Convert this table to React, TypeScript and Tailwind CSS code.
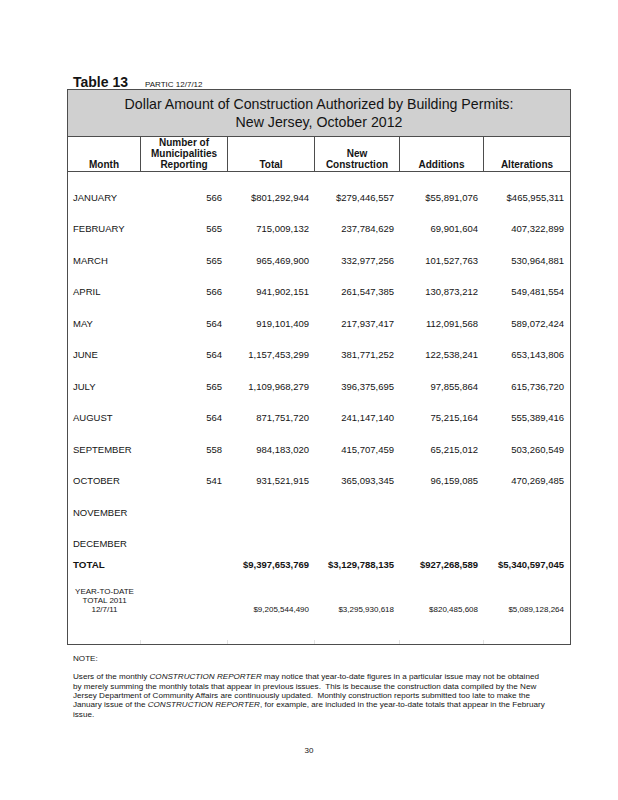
import React from 'react'

type Row = {
  month: string
  reporting?: string
  total?: string
  newConstruction?: string
  additions?: string
  alterations?: string
}

const rows: Row[] = [
  { month: 'JANUARY', reporting: '566', total: '$801,292,944', newConstruction: '$279,446,557', additions: '$55,891,076', alterations: '$465,955,311' },
  { month: 'FEBRUARY', reporting: '565', total: '715,009,132', newConstruction: '237,784,629', additions: '69,901,604', alterations: '407,322,899' },
  { month: 'MARCH', reporting: '565', total: '965,469,900', newConstruction: '332,977,256', additions: '101,527,763', alterations: '530,964,881' },
  { month: 'APRIL', reporting: '566', total: '941,902,151', newConstruction: '261,547,385', additions: '130,873,212', alterations: '549,481,554' },
  { month: 'MAY', reporting: '564', total: '919,101,409', newConstruction: '217,937,417', additions: '112,091,568', alterations: '589,072,424' },
  { month: 'JUNE', reporting: '564', total: '1,157,453,299', newConstruction: '381,771,252', additions: '122,538,241', alterations: '653,143,806' },
  { month: 'JULY', reporting: '565', total: '1,109,968,279', newConstruction: '396,375,695', additions: '97,855,864', alterations: '615,736,720' },
  { month: 'AUGUST', reporting: '564', total: '871,751,720', newConstruction: '241,147,140', additions: '75,215,164', alterations: '555,389,416' },
  { month: 'SEPTEMBER', reporting: '558', total: '984,183,020', newConstruction: '415,707,459', additions: '65,215,012', alterations: '503,260,549' },
  { month: 'OCTOBER', reporting: '541', total: '931,521,915', newConstruction: '365,093,345', additions: '96,159,085', alterations: '470,269,485' },
  { month: 'NOVEMBER' },
  { month: 'DECEMBER' },
]

const cols = 'grid grid-cols-[73px_87px_87px_85px_84px_86px]'

function HeaderCell({ lines, last }: { lines: string[]; last?: boolean }) {
  return (
    <div
      className={`flex h-[34px] flex-col items-center justify-end pb-[1px] text-center text-[10px] font-bold leading-[11px] ${
        last ? '' : 'border-r border-[#4d4d4d]'
      }`}
    >
      {lines.map((l) => (
        <span key={l} className="whitespace-nowrap">
          {l}
        </span>
      ))}
    </div>
  )
}

function Num({ children }: { children?: React.ReactNode }) {
  return <div className="whitespace-nowrap pr-[6px] text-right">{children}</div>
}

export default function App() {
  return (
    <div className="min-h-[800px] w-[618px] bg-white font-['Liberation_Sans',Arial,sans-serif] text-[#141414]">
      <div className="pt-[75px]">
        <div className="ml-[73px] flex h-[14px] items-baseline leading-none">
          <span className="text-[14px] font-bold">Table 13</span>
          <span className="ml-[17px] text-[8px]">PARTIC 12/7/12</span>
        </div>

        <div className="ml-[67px] w-[504px] border border-[#4d4d4d]">
          <div className="flex h-[47px] flex-col items-center justify-center border-b border-[#4d4d4d] bg-[#d0d0d0] text-[14.2px] leading-[18px]">
            <span>Dollar Amount of Construction Authorized by Building Permits:</span>
            <span>New Jersey, October 2012</span>
          </div>

          <div className={`${cols} border-b border-[#4d4d4d]`}>
            <HeaderCell lines={['Month']} />
            <HeaderCell lines={['Number of', 'Municipalities', 'Reporting']} />
            <HeaderCell lines={['Total']} />
            <HeaderCell lines={['New', 'Construction']} />
            <HeaderCell lines={['Additions']} />
            <HeaderCell lines={['Alterations']} last />
          </div>

          <div className="pt-[9.5px] text-[9.5px] leading-none">
            {rows.map((r) => (
              <div key={r.month} className={`${cols} h-[31.5px] items-center`}>
                <div className="pl-[5px]">{r.month}</div>
                <Num>{r.reporting}</Num>
                <Num>{r.total}</Num>
                <Num>{r.newConstruction}</Num>
                <Num>{r.additions}</Num>
                <Num>{r.alterations}</Num>
              </div>
            ))}

            <div className={`${cols} h-[11px] items-center text-[9.5px] font-bold`}>
              <div className="pl-[5px] text-[9.8px]">TOTAL</div>
              <div />
              <Num>$9,397,653,769</Num>
              <Num>$3,129,788,135</Num>
              <Num>$927,268,589</Num>
              <Num>$5,340,597,045</Num>
            </div>

            <div className={`${cols} mt-[16.7px] items-end text-[8px] leading-[9px]`}>
              <div className="flex flex-col items-center">
                <span>YEAR-TO-DATE</span>
                <span>TOTAL 2011</span>
                <span>12/7/11</span>
              </div>
              <div />
              <Num>$9,205,544,490</Num>
              <Num>$3,295,930,618</Num>
              <Num>$820,485,608</Num>
              <Num>$5,089,128,264</Num>
            </div>

            <div className="h-[26px]" />
            <div className={`${cols} h-[4px]`}>
              <div className="border-r border-[#e2e2e2]" />
              <div className="border-r border-[#e2e2e2]" />
              <div className="border-r border-[#e2e2e2]" />
              <div className="border-r border-[#e2e2e2]" />
              <div className="border-r border-[#e2e2e2]" />
              <div />
            </div>
          </div>
        </div>

        <div className="ml-[73px] mt-[9px] text-[8.1px] leading-[9.3px]">
          <p>NOTE:</p>
          <div className="mt-[9px] whitespace-pre">
            <p>
              Users of the monthly <i>CONSTRUCTION REPORTER</i> may notice that year-to-date figures in a particular issue may not be obtained
            </p>
            <p>by merely summing the monthly totals that appear in previous issues.  This is because the construction data compiled by the New</p>
            <p>Jersey Department of Community Affairs are continuously updated.  Monthly construction reports submitted too late to make the</p>
            <p>
              January issue of the <i>CONSTRUCTION REPORTER</i>, for example, are included in the year-to-date totals that appear in the February
            </p>
            <p>issue.</p>
          </div>
        </div>

        <p className="mt-[27px] text-center text-[8px] leading-[9px]">30</p>
      </div>
    </div>
  )
}
